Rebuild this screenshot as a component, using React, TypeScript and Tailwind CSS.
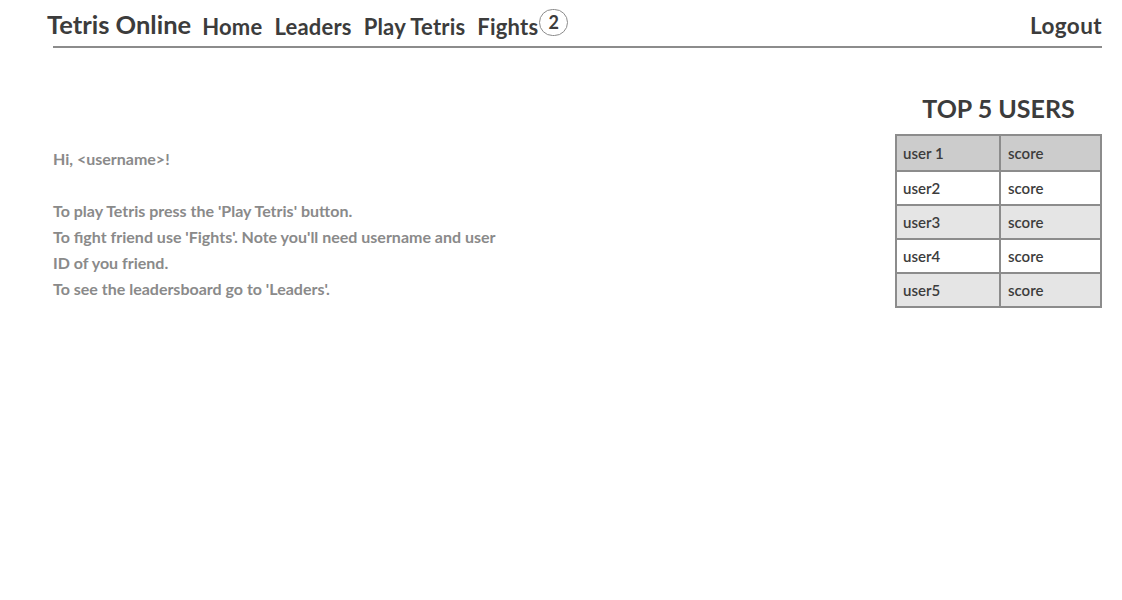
import React from "react";

const rows = [
  { u: "user 1", bg: "bg-[#cccccc]" },
  { u: "user2", bg: "bg-white" },
  { u: "user3", bg: "bg-[#e5e5e5]" },
  { u: "user4", bg: "bg-white" },
  { u: "user5", bg: "bg-[#e5e5e5]" },
];

export default function App() {
  return (
    <div
      className="w-[1122px] h-[600px] bg-white pl-[53px] pr-[20px] text-[#3c3c3c]"
      style={{ fontFamily: "Lato, 'Open Sans', sans-serif" }}
    >
      <header className="flex items-center h-[48px] border-b-2 border-[#8c8c8c]">
        <div className="flex items-center gap-[12px] -ml-[6px] pt-[6px]">
          <span className="text-[25.5px] font-bold -mt-[4px] mr-[-1px]">Tetris Online</span>
          <span className="text-[22px] font-bold tracking-[0.2px]">Home</span>
          <span className="text-[22px] font-bold tracking-[0.2px]">Leaders</span>
          <span className="text-[22px] font-bold tracking-[0.2px]">Play Tetris</span>
          <span className="flex items-center text-[22px] font-bold tracking-[0.2px]">
            Fights
            <span className="ml-[1px] -mt-[8px] flex items-center justify-center w-[29px] h-[27px] rounded-full border-[1.5px] border-[#8c8c8c] text-[18px] leading-none tracking-normal">
              2
            </span>
          </span>
        </div>
        <span className="ml-auto text-[22.5px] font-bold tracking-[0.4px] pt-[6px]">Logout</span>
      </header>

      <main className="flex justify-between">
        <section className="pt-[98px] text-[16px] leading-[26px] font-bold text-[#8a8a8a]">
          <p>Hi, &lt;username&gt;!</p>
          <p className="mt-[26px]">To play Tetris press the 'Play Tetris' button.</p>
          <p>To fight friend use 'Fights'. Note you'll need username and user</p>
          <p>ID of you friend.</p>
          <p>To see the leadersboard go to 'Leaders'.</p>
        </section>

        <aside className="w-[207px] pt-[45px]">
          <h2 className="text-center text-[25px] font-bold leading-[30px] text-[#3c3c3c]">
            TOP 5 USERS
          </h2>
          <div className="mt-[11px] border-2 border-[#8c8c8c]">
            {rows.map((r, i) => (
              <div
                key={r.u}
                className={`grid grid-cols-[104px_1fr] h-[34px] ${r.bg} ${
                  i > 0 ? "border-t-2 border-[#8c8c8c]" : ""
                }`}
              >
                <div className="border-r-2 border-[#8c8c8c] pl-[6px] flex items-center text-[15px] font-semibold text-[#3c3c3c]">
                  {r.u}
                </div>
                <div className="pl-[7px] flex items-center text-[15px] font-semibold text-[#3c3c3c]">
                  score
                </div>
              </div>
            ))}
          </div>
        </aside>
      </main>
    </div>
  );
}
